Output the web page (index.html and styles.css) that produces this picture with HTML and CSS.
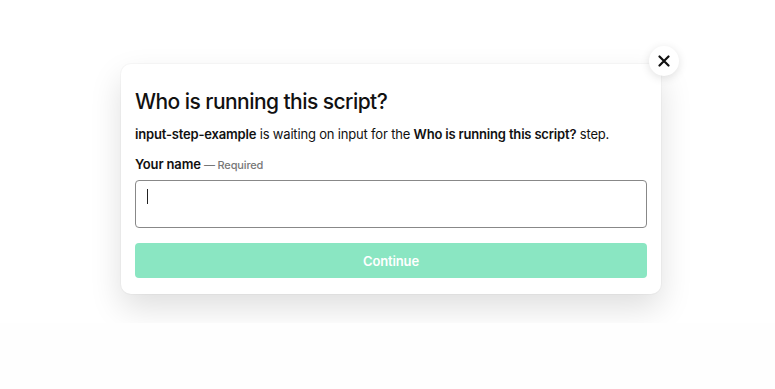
FILE: index.html
```html
<!DOCTYPE html>
<html>
	<head>
		<meta charset="utf-8">
		<title>Input step</title>
		<link rel="stylesheet" href="styles.css">
	</head>
	<body>
		<main class="stage">
			<div class="dialog">
				<button class="close" aria-label="Close">
					<svg width="12" height="12" viewBox="0 0 12 12"><path d="M1.5 1.5l9 9M10.5 1.5l-9 9" stroke="#111" stroke-width="2.2" stroke-linecap="round"/></svg>
				</button>
				<h1>Who is running this script?</h1>
				<p class="intro"><strong>input-step-example</strong> is waiting on input for the <strong>Who is running this script?</strong> step.</p>
				<label class="field">
					<span class="label">Your name <span class="req">— Required</span></span>
					<span class="input"><span class="caret"></span></span>
				</label>
				<button class="continue">Continue</button>
			</div>
		</main>
	</body>
</html>
```

FILE: styles.css
```css
html, body {
	background: #fefefe;
}
body {
	color: #111;
	font-family: Inter, "Noto Sans", sans-serif;
	margin: 0;
}
.stage {
	background: #fff;
	height: 323px;
	overflow: hidden;
	padding: 64px 0 0 121px;
	box-sizing: border-box;
}
.dialog {
	background: #fff;
	border-radius: 10px;
	box-shadow: 0 0 0 1px rgba(0, 0, 0, .025), 0 14px 32px rgba(0, 0, 0, .13);
	box-sizing: border-box;
	display: flex;
	flex-direction: column;
	padding: 24px 14px 16px;
	position: relative;
	width: 540px;
}
.close {
	align-items: center;
	background: #fff;
	border: 0;
	border-radius: 50%;
	box-shadow: 0 2px 10px rgba(0, 0, 0, .12);
	display: flex;
	height: 30px;
	justify-content: center;
	padding: 0;
	position: absolute;
	right: -18px;
	top: -18px;
	width: 30px;
}
h1 {
	font-size: 21px;
	font-weight: 500;
	letter-spacing: -.55px;
	line-height: 28px;
	margin: 0 0 8px;
}
.intro {
	font-size: 13px;
	letter-spacing: -.18px;
	line-height: 20px;
	margin: 0 0 10px;
}
.intro strong, .label {
	font-weight: 600;
}
.field {
	display: flex;
	flex-direction: column;
}
.label {
	font-size: 13px;
	letter-spacing: -.15px;
	line-height: 20px;
}
.req {
	color: #777;
	font-size: 11px;
	font-weight: 500;
}
.input {
	border: 1px solid #888;
	border-radius: 4px;
	box-sizing: border-box;
	display: flex;
	height: 48px;
	margin-top: 5px;
	padding: 8px 11px;
}
.caret {
	background: #222;
	height: 15px;
	width: 1px;
}
.continue {
	background: #8ae6c2;
	border: 0;
	border-radius: 4px;
	color: #fff;
	font-family: inherit;
	font-size: 13px;
	font-weight: 600;
	height: 35px;
	letter-spacing: -.15px;
	margin-top: 15px;
}
```
